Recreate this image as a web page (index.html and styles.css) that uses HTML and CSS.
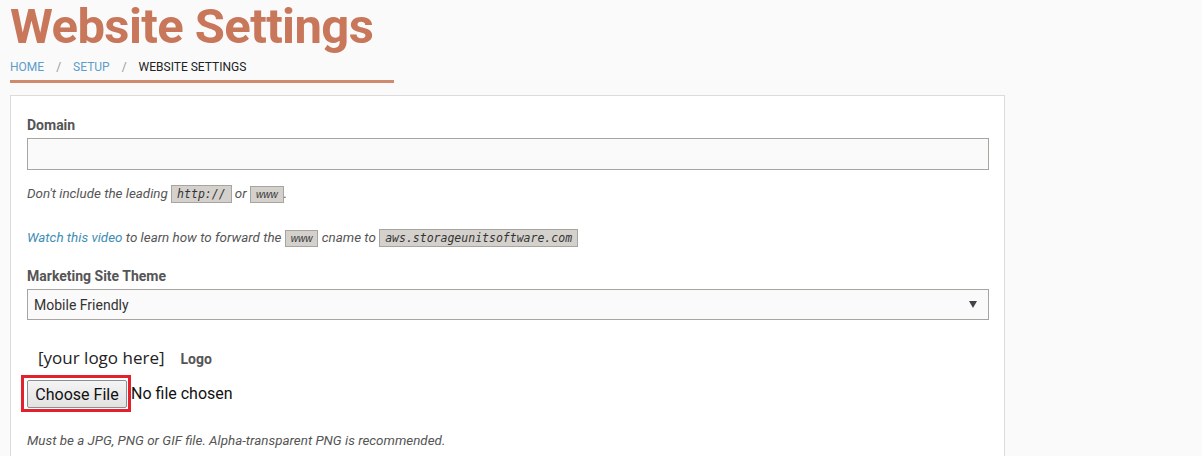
FILE: index.html
```html
<!DOCTYPE html>
<html lang="en">
<head>
    <meta charset="UTF-8">
    <title>Website Settings</title>
    <link rel="stylesheet" href="styles.css">
</head>
<body>
    <div class="page-header">
        <h1>Website Settings</h1>
        <ul class="breadcrumb">
            <li><a href="#">Home</a></li>
            <li class="sep">/</li>
            <li><a href="#">Setup</a></li>
            <li class="sep">/</li>
            <li class="current">Website Settings</li>
        </ul>
    </div>

    <div class="card">
        <div class="field">
            <label for="domain">Domain</label>
            <input type="text" id="domain" class="text-input">
            <p class="help">Don't include the leading <code>http://</code> or <code class="small">www</code>.</p>
            <p class="help last"><a href="#">Watch this video</a> to learn how to forward the <code class="small">www</code> cname to <code>aws.storageunitsoftware.com</code></p>
        </div>

        <div class="field">
            <label for="theme">Marketing Site Theme</label>
            <div class="select-wrap">
                <select id="theme" class="select-input">
                    <option>Mobile Friendly</option>
                </select>
                <span class="caret"></span>
            </div>
        </div>

        <div class="logo-row">
            <span class="logo-preview">[your logo here]</span>
            <span class="logo-label">Logo</span>
        </div>
        <div class="file-row">
            <span class="highlight"><button type="button" class="file-button">Choose File</button></span>
            <span class="file-name">No file chosen</span>
        </div>
        <p class="help">Must be a JPG, PNG or GIF file. Alpha-transparent PNG is recommended.</p>
    </div>
</body>
</html>
```

FILE: styles.css
```css
body {
    font-family: Roboto, "Liberation Sans", Arial, sans-serif;
    background-color: #fafafa;
    color: #555;
    margin: 0;
    padding: 0 10px;
}
.page-header {
    width: 384px;
    border-bottom: 3px solid #d08a6e;
}
h1 {
    margin: 0;
    font-size: 49px;
    line-height: 54px;
    font-weight: 700;
    color: #c8775a;
    letter-spacing: -0.6px;
    white-space: nowrap;
}
.breadcrumb {
    list-style: none;
    margin: 0;
    padding: 3px 0 3px;
    display: flex;
    gap: 12px;
    font-size: 12px;
    line-height: 20px;
    text-transform: uppercase;
}
.breadcrumb a {
    color: #5d9ccb;
    text-decoration: none;
}
.breadcrumb .sep {
    color: #999;
}
.breadcrumb .current {
    color: #222;
}
.card {
    margin-top: 12px;
    width: 961px;
    padding: 19px 16px 4px;
    background-color: #fff;
    border: 1px solid #dcdcdc;
}
.field label {
    display: block;
    font-size: 14px;
    font-weight: 700;
    color: #555;
    line-height: 20px;
    margin-bottom: 3px;
}
.text-input {
    display: block;
    box-sizing: border-box;
    width: 962px;
    height: 32px;
    border: 1px solid #a8a49f;
    background-color: #fafafa;
    margin: 0;
}
.help {
    font-size: 13.4px;
    font-style: italic;
    color: #555;
    line-height: 20px;
    margin: 14px 0 23px;
}
.help.last {
    margin-bottom: 17px;
}
.help a {
    color: #3e8db4;
    text-decoration: none;
}
code {
    font-family: "DejaVu Sans Mono", monospace;
    font-size: 11.5px;
    font-style: italic;
    background-color: #d4d1cd;
    border: 1px solid #a8a49f;
    color: #333;
    padding: 1px 5px;
}
code.small {
    font-family: "Liberation Sans", Arial, sans-serif;
    font-size: 10px;
    padding: 2px 5px;
}
.select-wrap {
    position: relative;
    width: 962px;
}
.select-input {
    display: block;
    box-sizing: border-box;
    width: 100%;
    height: 31px;
    appearance: none;
    border: 1px solid #a8a49f;
    background-color: #fafafa;
    font-family: Roboto, sans-serif;
    font-size: 14px;
    color: #333;
    padding: 0 6px;
    margin: 0;
}
.caret {
    position: absolute;
    right: 12px;
    top: 12px;
    border-left: 4px solid transparent;
    border-right: 4px solid transparent;
    border-top: 7px solid #444;
}
.logo-row {
    display: flex;
    align-items: baseline;
    gap: 16px;
    margin-top: 26px;
    padding-left: 11px;
}
.logo-preview {
    font-family: "Open Sans", sans-serif;
    font-size: 17px;
    color: #222;
}
.logo-label {
    font-size: 14px;
    font-weight: 700;
    color: #555;
}
.file-row {
    display: flex;
    align-items: center;
    margin: 6px 0 0 -6px;
}
.highlight {
    border: 3px solid #e3202b;
    padding: 2px 1px 1px 3px;
    display: flex;
}
.file-button {
    font-family: Roboto, Arial, sans-serif;
    font-size: 16px;
    color: #111;
    background: linear-gradient(#f4f4f4, #e2e2e2);
    border: 1px solid #8e8e8e;
    border-radius: 2px;
    padding: 0 4px;
    width: 100px;
    height: 28px;
    white-space: nowrap;
}
.file-name {
    font-size: 16px;
    color: #111;
}
.file-row + .help {
    margin-top: 19px;
}
```
